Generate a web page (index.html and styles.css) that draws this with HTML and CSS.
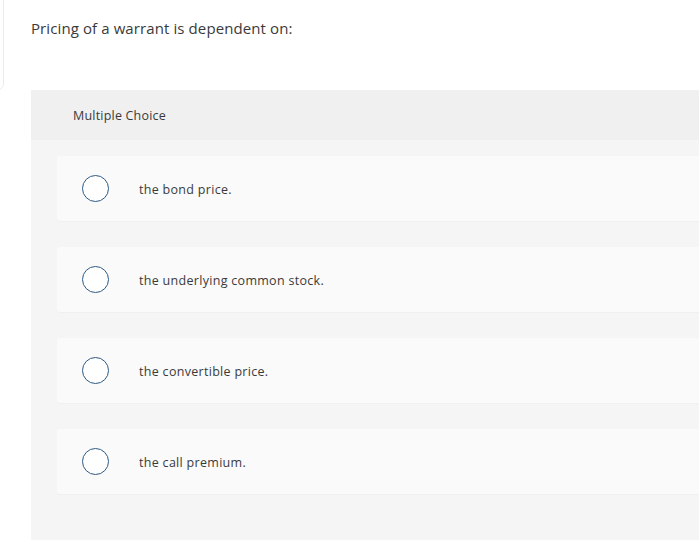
FILE: index.html
```html
<!DOCTYPE html>
<html>
<head>
<meta charset="utf-8">
<link rel="stylesheet" href="styles.css">
</head>
<body>
<div class="edge"></div>
<main class="question">
  <p class="prompt">Pricing of a warrant is dependent on:</p>
  <section class="panel">
    <header class="panel-head">Multiple Choice</header>
    <div class="options">
      <label class="option"><span class="radio"></span><span class="text">the bond price.</span></label>
      <label class="option"><span class="radio"></span><span class="text">the underlying common stock.</span></label>
      <label class="option"><span class="radio"></span><span class="text">the convertible price.</span></label>
      <label class="option"><span class="radio"></span><span class="text">the call premium.</span></label>
    </div>
  </section>
</main>
</body>
</html>
```
FILE: styles.css
```css
html, body {
  margin: 0;
  padding: 0;
  background: #ffffff;
  overflow: hidden;
  width: 699px;
  height: 540px;
}
body {
  font-family: "Open Sans", Lato, Arial, sans-serif;
  color: #3a3a3a;
  position: relative;
}
.edge {
  position: absolute;
  left: -10px;
  top: -10px;
  width: 12px;
  height: 98px;
  border: 1px solid #ececec;
  border-radius: 6px;
}
.question {
  padding-left: 31px;
}
.prompt {
  margin: 0;
  padding-top: 18px;
  height: 90px;
  box-sizing: border-box;
  font-size: 15px;
  line-height: 20px;
  letter-spacing: 0.1px;
  color: #3a3a3a;
}
.panel {
  background: #f5f5f5;
  height: 450px;
}
.panel-head {
  background: #f0f0f0;
  height: 50px;
  display: flex;
  align-items: center;
  padding-left: 42px;
  font-size: 12.5px;
  letter-spacing: 0.2px;
  color: #3a3a3a;
}
.options {
  padding: 16px 0 0 26px;
  display: flex;
  flex-direction: column;
  gap: 26px;
}
.option {
  height: 65px;
  background: #fafafa;
  border-radius: 3px 0 0 3px;
  box-shadow: 0 1px 0 #f0f0f0;
  display: flex;
  align-items: center;
  padding-left: 25px;
}
.radio {
  width: 25px;
  height: 25px;
  border: 1.5px solid #2c5a84;
  border-radius: 50%;
  background: #ffffff;
  flex: none;
}
.text {
  margin-left: 30px;
  font-size: 12.5px;
  letter-spacing: 0.3px;
  color: #3a3a3a;
  padding-top: 1px;
}
```
